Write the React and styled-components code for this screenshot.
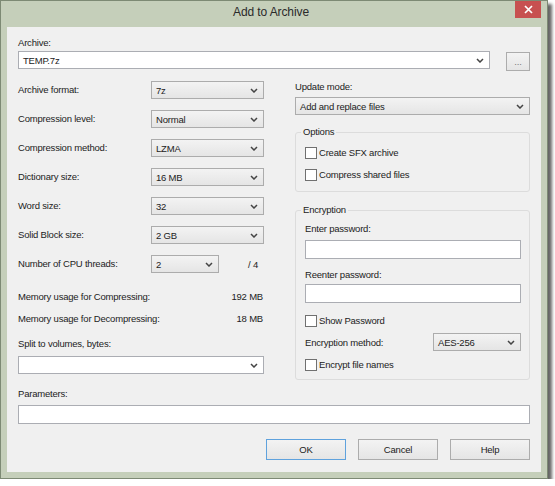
import React from "react";
import styled, { createGlobalStyle } from "styled-components";

const GlobalStyle = createGlobalStyle`
  html, body {
    margin: 0;
    background: #ffffff;
  }
  body {
    font-family: "Liberation Sans", Arial, sans-serif;
    font-size: 9.5px;
    letter-spacing: -0.2px;
    color: #222222;
  }
`;

const Chevron = () => (
  <svg width="8" height="5" viewBox="0 0 8 5">
    <path d="M1 1 L4 4 L7 1" stroke="#444" strokeWidth="1.5" fill="none" />
  </svg>
);

const CloseIcon = () => (
  <svg width="9" height="9" viewBox="0 0 9 9">
    <path d="M1 1 L8 8 M8 1 L1 8" stroke="#fff" strokeWidth="1.7" fill="none" />
  </svg>
);

function Select({ value, w, editable, grow, mt }) {
  return (
    <Combo $w={w} $editable={editable} $grow={grow} $mt={mt}>
      <span>{value}</span>
      <Chevron />
    </Combo>
  );
}

function Check({ label, mt }) {
  return (
    <CheckRow $mt={mt}>
      <Box type="checkbox" readOnly />
      <span>{label}</span>
    </CheckRow>
  );
}

const settings = [
  ["Archive format:", "7z"],
  ["Compression level:", "Normal"],
  ["Compression method:", "LZMA"],
  ["Dictionary size:", "16 MB"],
  ["Word size:", "32"],
  ["Solid Block size:", "2 GB"],
];

export default function App() {
  return (
    <>
      <GlobalStyle />
      <Window>
        <TitleBar>
          <Title>Add to Archive</Title>
          <CloseButton>
            <CloseIcon />
          </CloseButton>
        </TitleBar>
        <Client>
          <Label>Archive:</Label>
          <ArchiveRow>
            <Select value="TEMP.7z" editable grow />
            <BrowseButton>...</BrowseButton>
          </ArchiveRow>

          <Columns>
            <Column>
              <SettingsGrid>
                {settings.map(([label, value]) => (
                  <React.Fragment key={label}>
                    <Label>{label}</Label>
                    <Select value={value} />
                  </React.Fragment>
                ))}
                <Label>Number of CPU threads:</Label>
                <ThreadCell>
                  <Select value="2" w={68} />
                  <Ratio>/ 4</Ratio>
                </ThreadCell>
              </SettingsGrid>
              <MemoryRow $mt={18}>
                <span>Memory usage for Compressing:</span>
                <span>192 MB</span>
              </MemoryRow>
              <MemoryRow $mt={10}>
                <span>Memory usage for Decompressing:</span>
                <span>18 MB</span>
              </MemoryRow>
              <Label $mt={13}>Split to volumes, bytes:</Label>
              <Select value="" editable mt={6} />
            </Column>

            <Column>
              <Label>Update mode:</Label>
              <Select value="Add and replace files" mt={4} />

              <Group $mt={11} $pt={9} $pb={10}>
                <Legend>Options</Legend>
                <Check label="Create SFX archive" />
                <Check label="Compress shared files" mt={10} />
              </Group>

              <Group $mt={12} $pt={7} $pb={8}>
                <Legend>Encryption</Legend>
                <Label>Enter password:</Label>
                <TextBox $mt={5} />
                <Label $mt={10}>Reenter password:</Label>
                <TextBox $mt={3} />
                <Check label="Show Password" mt={12} />
                <MethodRow>
                  <span>Encryption method:</span>
                  <Select value="AES-256" w={88} />
                </MethodRow>
                <Check label="Encrypt file names" mt={8} />
              </Group>
            </Column>
          </Columns>

          <Label $mt={8}>Parameters:</Label>
          <TextBox $mt={5} />

          <ButtonRow>
            <DialogButton $default>OK</DialogButton>
            <DialogButton>Cancel</DialogButton>
            <DialogButton>Help</DialogButton>
          </ButtonRow>
        </Client>
      </Window>
    </>
  );
}

const Window = styled.div`
  width: 546px;
  height: 477px;
  border: 1px solid #7d8a74;
  background: #c5cfba;
  box-shadow: 4px 4px 3px rgba(0, 0, 0, 0.6);
  display: flex;
  flex-direction: column;
`;

const TitleBar = styled.div`
  display: grid;
  grid-template-columns: 1fr auto 1fr;
  height: 26px;
  padding-right: 6px;
`;

const Title = styled.div`
  grid-column: 2;
  font-size: 12px;
  line-height: 22px;
  letter-spacing: -0.1px;
  color: #2a2a2a;
`;

const CloseButton = styled.div`
  grid-column: 3;
  justify-self: end;
  width: 26px;
  height: 17px;
  background: #c75050;
  display: flex;
  align-items: center;
  justify-content: center;
`;

const Client = styled.div`
  flex: 1;
  margin: 0 6px 6px;
  padding: 10px 11px 0;
  background: #f0f0f0;
  box-sizing: border-box;
  display: flex;
  flex-direction: column;
`;

const Label = styled.div`
  height: 12px;
  line-height: 12px;
  white-space: nowrap;
  margin-top: ${p => p.$mt || 0}px;
`;

const Combo = styled.div`
  box-sizing: border-box;
  flex: ${p => (p.$grow ? "1 1 auto" : "none")};
  width: ${p => (p.$w ? `${p.$w}px` : "auto")};
  height: 18px;
  margin-top: ${p => p.$mt || 0}px;
  padding: 0 5px 0 4px;
  display: flex;
  align-items: center;
  justify-content: space-between;
  border: 1px solid ${p => (p.$editable ? "#abadb3" : "#acacac")};
  background: ${p =>
    p.$editable ? "#ffffff" : "linear-gradient(#f3f3f3, #e5e5e5)"};
  white-space: nowrap;
`;

const ArchiveRow = styled.div`
  display: flex;
  align-items: flex-start;
  margin-top: 2px;
`;

const BrowseButton = styled.div`
  box-sizing: border-box;
  width: 24px;
  height: 19px;
  margin: 1px 0 0 16px;
  border: 1px solid #acacac;
  background: linear-gradient(#f3f3f3, #e5e5e5);
  color: #777;
  display: flex;
  align-items: center;
  justify-content: center;
`;

const Columns = styled.div`
  display: grid;
  grid-template-columns: 246px 235px;
  column-gap: 31px;
  align-items: start;
  margin-top: 10px;
`;

const Column = styled.div`
  display: flex;
  flex-direction: column;
`;

const SettingsGrid = styled.div`
  display: grid;
  grid-template-columns: 133px 113px;
  grid-auto-rows: 18px;
  row-gap: 11px;
  align-items: center;
`;

const ThreadCell = styled.div`
  display: flex;
  align-items: center;
`;

const Ratio = styled.span`
  margin-left: 29px;
`;

const MemoryRow = styled.div`
  display: flex;
  justify-content: space-between;
  height: 12px;
  line-height: 12px;
  padding-right: 1px;
  margin-top: ${p => p.$mt}px;
`;

const Group = styled.fieldset`
  margin: ${p => p.$mt}px 0 0;
  padding: ${p => p.$pt}px 8px ${p => p.$pb}px 9px;
  border: 1px solid #dcdcdc;
  border-radius: 3px;
  min-width: 0;
  display: flex;
  flex-direction: column;
`;

const Legend = styled.legend`
  padding: 0 2px;
  margin-left: -4px;
  line-height: 12px;
`;

const CheckRow = styled.label`
  display: flex;
  align-items: center;
  gap: 2px;
  height: 12px;
  line-height: 12px;
  margin-top: ${p => p.$mt || 0}px;
`;

const Box = styled.input`
  appearance: none;
  box-sizing: border-box;
  width: 12px;
  height: 12px;
  margin: 0;
  border: 1px solid #707070;
  background: #ffffff;
`;

const TextBox = styled.div`
  box-sizing: border-box;
  height: 19px;
  margin-top: ${p => p.$mt}px;
  border: 1px solid #abadb3;
  background: #ffffff;
`;

const MethodRow = styled.div`
  display: flex;
  align-items: center;
  justify-content: space-between;
  margin-top: 6px;
`;

const ButtonRow = styled.div`
  display: flex;
  justify-content: flex-end;
  gap: 12px;
  margin-top: 15px;
`;

const DialogButton = styled.div`
  box-sizing: border-box;
  width: 80px;
  height: 21px;
  border: 1px solid ${p => (p.$default ? "#5fa2dd" : "#acacac")};
  background: linear-gradient(#f3f3f3, #e5e5e5);
  display: flex;
  align-items: center;
  justify-content: center;
`;
